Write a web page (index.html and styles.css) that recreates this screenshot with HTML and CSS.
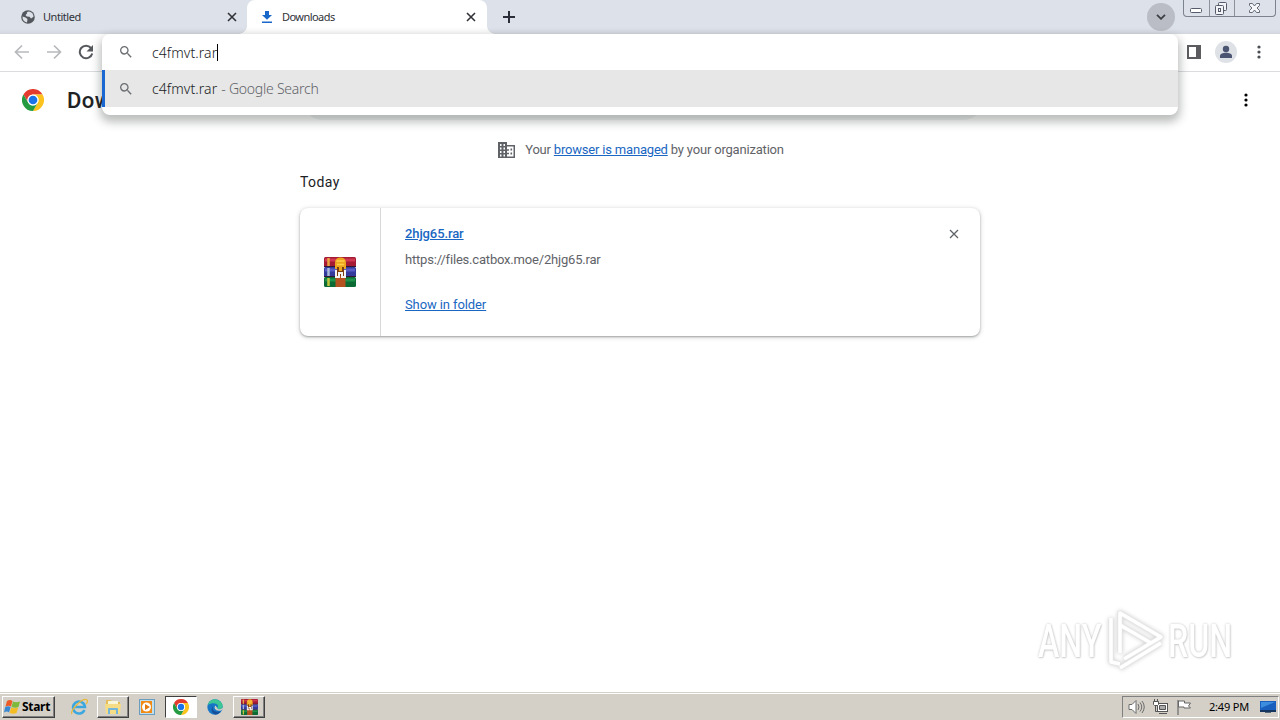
FILE: index.html
```html
<!DOCTYPE html>
<html lang="en">

<head>
    <meta charset="UTF-8">
    <meta name="viewport" content="width=device-width, initial-scale=1.0">
    <title>Downloads</title>
    <link rel="stylesheet" href="styles.css">
</head>

<body>

    <!-- shared icons -->
    <svg class="defs" width="0" height="0">
        <symbol id="chrome" viewBox="0 0 48 48">
            <circle cx="24" cy="24" r="23" fill="#fff"/>
            <path d="M24 12h20.8A24 24 0 0 0 3.2 12l10.4 18A12 12 0 0 1 24 12z" fill="#e33b2e"/>
            <path d="M34.4 30 24 48A24 24 0 0 0 44.8 12H24a12 12 0 0 1 10.4 18z" fill="#fcc31e"/>
            <path d="M13.6 30 3.2 12A24 24 0 0 0 24 48l10.4-18a12 12 0 0 1-20.8 0z" fill="#249a41"/>
            <circle cx="24" cy="24" r="12" fill="#fff"/>
            <circle cx="24" cy="24" r="9.5" fill="#1a73e8"/>
        </symbol>
        <symbol id="search" viewBox="0 0 24 24">
            <path d="M15.5 14h-.79l-.28-.27A6.47 6.47 0 0 0 16 9.5 6.5 6.5 0 1 0 9.5 16c1.61 0 3.09-.59 4.23-1.57l.27.28v.79l5 4.99L20.49 19l-4.99-5zm-6 0C7.01 14 5 11.99 5 9.5S7.01 5 9.5 5 14 7.01 14 9.5 11.99 14 9.5 14z" fill="#6b6e72"/>
        </symbol>
        <symbol id="cross" viewBox="0 0 10 10">
            <path d="M1 1l8 8M9 1l-8 8" stroke="currentColor" fill="none"/>
        </symbol>
        <symbol id="dots" viewBox="0 0 4 14">
            <circle cx="2" cy="2" r="1.6"/><circle cx="2" cy="7" r="1.6"/><circle cx="2" cy="12" r="1.6"/>
        </symbol>
        <symbol id="winrar" viewBox="0 0 32 30">
            <rect y="0" width="32" height="10" rx="1.5" fill="#a51b35"/>
            <rect x="1" y="1.500" width="30" height="3" fill="#cf3850"/>
            <rect y="10" width="32" height="10" rx="1.5" fill="#343a9c"/>
            <rect x="1" y="11.500" width="30" height="3" fill="#565dc4"/>
            <rect y="20" width="32" height="10" rx="1.5" fill="#0c6b35"/>
            <rect x="1" y="21.500" width="30" height="3" fill="#1f9149"/>
            <path d="M0 9.500h32M0 19.500h32" stroke="#301830"/>
            <path d="M4.500 1v8" stroke="#e8a540" stroke-width="2.500"/>
            <path d="M4.500 11v8" stroke="#a9bad8" stroke-width="2.500"/>
            <path d="M4.500 21v8" stroke="#c4c43c" stroke-width="2.500"/>
            <rect x="11.500" y="18" width="10" height="12" fill="#b4531f"/>
            <path d="M11 12V6q0-5.500 5.500-5.500T22 6v6z" fill="#eda61f"/>
            <path d="M12.500 4h8M13 7.500h7" stroke="#ffcf4a" stroke-width="1.500"/>
            <rect x="13" y="10" width="7" height="9" fill="#7b3c10"/>
            <path d="M15 9h3v5h-3z" fill="#eda61f"/>
            <path d="M12 13v7h3v-4h3v4h3v-7" fill="none" stroke="#f4f4f4" stroke-width="2"/>
        </symbol>
    </svg>

    <header class="tabstrip">
        <div class="tab">
            <svg width="14" height="14" viewBox="0 0 14 14">
                <circle cx="7" cy="7" r="6.800" fill="#53575d"/>
                <path d="M8 1.500c-2 0-2.500 1-2 2L4.500 5l1.300 1.500 2.700.2L10 8.500l2.500-1.700C12.500 4 11 2.200 8 1.500zM1.500 6.500l3 1 2 1.500-.5 3.500C3 12 1.300 9.500 1.500 6.500z" fill="#dce0e8"/>
            </svg>
            <span class="tab-title">Untitled</span>
            <svg class="tab-close" width="10" height="10"><use href="#cross"/></svg>
        </div>
        <div class="tab active">
            <svg width="12" height="14" viewBox="0 0 12 14" fill="#1967c8">
                <path d="M4 1h4v4h3L6 9.800 1 5h3zM1 11.500h10V13H1z"/>
            </svg>
            <span class="tab-title">Downloads</span>
            <svg class="tab-close" width="10" height="10"><use href="#cross"/></svg>
        </div>
        <svg class="new-tab" width="12" height="12" viewBox="0 0 12 12"><path d="M6 0v12M0 6h12" stroke="#2b2e38" stroke-width="2"/></svg>
        <div class="tab-search">
            <svg width="10" height="6" viewBox="0 0 10 6"><path d="M1 .8l4 4 4-4" fill="none" stroke="#3c4043" stroke-width="1.800"/></svg>
        </div>
        <div class="window-buttons">
            <span><svg width="25" height="16" viewBox="0 0 25 16"><rect x="6.500" y="8.500" width="11" height="4" rx="1" fill="#fff" stroke="#555b68"/></svg></span>
            <span><svg width="24" height="16" viewBox="0 0 24 16" fill="#f2f4f8" stroke="#555b68"><rect x="8.500" y="2.500" width="8" height="8" rx="1"/><rect x="5.500" y="5.500" width="8" height="9" rx="1"/><rect x="8.500" y="8.500" width="2" height="3"/></svg></span>
            <span><svg width="41" height="16" viewBox="0 0 41 16"><path d="M14.500 3.500h3l2 2.500 2-2.500h3v2L22 8l2.500 2.500v2h-3l-2-2.500-2 2.500h-3v-2L17 8l-2.500-2.500z" fill="#f5f7fa" stroke="#666b76"/></svg></span>
        </div>
    </header>

    <div class="toolbar">
        <div class="nav">
            <svg width="16" height="16" viewBox="0 0 16 16" fill="none" stroke="#b7b9bc" stroke-width="1.700"><path d="M15 8H2M8 1.500 1.500 8 8 14.500"/></svg>
            <svg width="16" height="16" viewBox="0 0 16 16" fill="none" stroke="#b7b9bc" stroke-width="1.700"><path d="M1 8h13M8 1.500 14.500 8 8 14.500"/></svg>
            <svg width="16" height="16" viewBox="0 0 16 16"><path d="M13 4A6.300 6.300 0 1 0 14.200 9.500" fill="none" stroke="#55585c" stroke-width="2"/><path d="M15 1v6.500H8.500z" fill="#55585c"/></svg>
        </div>
        <div class="toolbar-right">
            <svg width="14" height="14" viewBox="0 0 14 14"><path d="M1 1h12v12H1z" fill="#fff" stroke="#5b5b60" stroke-width="2"/><path d="M9 0h5v14H9z" fill="#5b5b60"/></svg>
            <svg class="avatar" width="22" height="22" viewBox="0 0 22 22"><circle cx="11" cy="11" r="11" fill="#dee1e6"/><circle cx="11" cy="8" r="3.200" fill="#4b5470"/><path d="M5 17v-2c0-2 3-3.200 6-3.200s6 1.200 6 3.200v2z" fill="#4b5470"/></svg>
            <svg class="menu" width="4" height="14"><use href="#dots"/></svg>
        </div>
    </div>

    <main class="page">
        <div class="page-header">
            <svg width="22" height="22"><use href="#chrome"/></svg>
            <h1>Downloads</h1>
            <div class="search-field"></div>
            <svg class="page-menu" width="4" height="14"><use href="#dots"/></svg>
        </div>

        <div class="managed">
            <svg width="17" height="16" viewBox="0 0 17 16">
                <path d="M0 0h9v3h8v13H0z" fill="#5f6368"/>
                <path d="M2 2h1.500v2H2zM5.500 2H7v2H5.500zM2 5.500h1.500v2H2zM5.500 5.500H7v2H5.500zM2 9h1.500v2H2zM5.500 9H7v2H5.500zM2 12.500h1.500v2H2zM5.500 12.500H7v2H5.500zM9 4.500h6.500v10H9z" fill="#fff"/>
                <path d="M9 7.200h2v1.600H9zM12.500 6.500h1.600v2h-1.600zM9 10.800h2v1.500H9zM12.500 10.500h1.600v2h-1.600z" fill="#5f6368"/>
            </svg>
            <span>Your <a href="#">browser is managed</a> by your organization</span>
        </div>

        <section class="downloads">
            <h2>Today</h2>
            <div class="card">
                <div class="file-icon"><svg width="32" height="30"><use href="#winrar"/></svg></div>
                <div class="details">
                    <a class="file-name" href="#">2hjg65.rar</a>
                    <span class="url">https://files.catbox.moe/2hjg65.rar</span>
                    <a class="show" href="#">Show in folder</a>
                </div>
                <svg class="remove" width="10" height="10"><use href="#cross"/></svg>
            </div>
        </section>
    </main>

    <!-- address bar with suggestions, lies over the page -->
    <div class="omnibox">
        <div class="omni-row">
            <svg width="16" height="16"><use href="#search"/></svg>
            <span class="query">c4fmvt.rar</span><i class="caret"></i>
        </div>
        <div class="omni-row selected">
            <svg width="16" height="16"><use href="#search"/></svg>
            <span class="query">c4fmvt.rar</span><span class="hint">- Google Search</span>
        </div>
    </div>

    <div class="watermark">
        <span>ANY</span>
        <svg width="58" height="62" viewBox="0 0 58 62" fill="none" stroke-linejoin="round">
            <g stroke="#e6e6e6" stroke-width="5"><path d="M14 44V4l41 24-37 22M14 16l31 18M5 9v44l9 2M14 59l41-25"/></g>
            <g stroke="#fff" stroke-width="3.500"><path d="M14 44V4l41 24-37 22M14 16l31 18M5 9v44l9 2M14 59l41-25"/></g>
        </svg>
        <span>RUN</span>
    </div>

    <footer class="taskbar">
        <div class="start">
            <svg width="17" height="16" viewBox="0 0 17 16">
                <path d="M3 2q3-2 5.500 0L7 7.500q-2-1.500-5.500 0z" fill="#ed5b27"/>
                <path d="M9 2.500q3 1.500 7 0L14.500 8q-3 1.500-7 0z" fill="#7dba3c"/>
                <path d="M1.200 8q3-1.500 5.500 0L5 13.500q-2-2-5 0z" fill="#3988d1"/>
                <path d="M7.200 8.500q3 1.500 7 0L12.500 14q-3 1.500-7 0z" fill="#f5bd24"/>
            </svg>
            <span>Start</span>
        </div>
        <div class="task">
            <svg width="18" height="18" viewBox="0 0 18 18" fill="none">
                <path d="M14.500 12A6 6 0 1 1 15 9H5" stroke="#3ca7df" stroke-width="2.500"/>
                <path d="M2 16C-1 13 13-1 17 2c1 1 0 3-1 4" stroke="#e7b83e" stroke-width="1.300"/>
            </svg>
        </div>
        <div class="task open">
            <svg width="18" height="17" viewBox="0 0 18 17">
                <path d="M2 2h5l1 2h8v12H2z" fill="#e4bd58"/><path d="M4 3h10v5H4z" fill="#f8f6d9"/><path d="M1 6h16l-1 10H2z" fill="#f6dc84"/>
                <path d="M4 16v-5q0-1 1-1h8q1 0 1 1v5h-2v-4H6v4z" fill="#72b6dc"/>
            </svg>
        </div>
        <div class="task">
            <svg width="16" height="16" viewBox="0 0 16 16"><rect x=".5" y=".5" width="15" height="15" fill="#bfdff0" stroke="#6a9dbe"/><path d="M2 2h11v12H2z" fill="#f28a16"/><circle cx="7.500" cy="8" r="4.500" fill="#fff"/><path d="M6 5l5 3-5 3z" fill="#e37b10"/></svg>
        </div>
        <div class="task pressed"><svg width="16" height="16"><use href="#chrome"/></svg></div>
        <div class="task">
            <svg width="16" height="16" viewBox="0 0 16 16">
                <circle cx="8" cy="8" r="7.700" fill="#1676c5"/>
                <path d="M.8 6C2 1.500 6 0 9 .4c5 .8 8 5.600 6.200 8.500-1.300 2-5 1.500-5 .1 0-.8 1-1 .8-2.200C10.500 4 5 3 .8 6z" fill="#3cc596"/>
                <path d="M6 7c-1.500 3.500 1 7 7.500 5.500-1 1.500-3 2.800-5 3C5 14.500 3 10 6 7z" fill="#164e99"/>
                <path d="M8.500 6.500c-2 2-.5 5 3.500 5.300 1.500.1 2.500-.4 3.300-1.300l.7-1.500-.8-.1c-1.300 2-5 1.500-5 .1z" fill="#d4d0c8"/>
            </svg>
        </div>
        <div class="task open"><svg width="17" height="16" viewBox="0 0 32 30" preserveAspectRatio="none"><use href="#winrar"/></svg></div>

        <div class="tray">
            <svg width="17" height="16" viewBox="0 0 17 16" fill="none" stroke="#6d6d6d"><path d="M1 5.500h3l4-4v13l-4-4H1z" fill="#fff"/><path d="M10 5q2 3 0 6M12 3.500q3.500 4.500 0 9M14 2q4.500 6 0 12"/></svg>
            <svg width="17" height="16" viewBox="0 0 17 16" fill="#fff" stroke="#555"><rect x="5.500" y="4.500" width="10" height="8"/><path d="M7.500 6.500h6v4h-6z" fill="#aaa"/><path d="M7 14.500h8"/><path d="M3.500 7v5.500h3" fill="none"/><path d="M1.500 2.500h5v3l-1 1h-3l-1-1zM2.500 0v2M5.500 0v2"/></svg>
            <svg width="17" height="16" viewBox="0 0 17 16"><path d="M2 1v15" stroke="#555"/><path d="M2.500 2h6v2h6l-2 3 2 2H8V8H2.500z" fill="#fff" stroke="#666"/></svg>
            <time>2:49 PM</time>
            <svg width="16" height="14" viewBox="0 0 16 14"><path d="M0 1h16v9H0z" fill="#195fbd"/><path d="M1 2h14L1 8z" fill="#3c8ddd"/><path d="M0 10h16v2H0z" fill="#17365f"/><path d="M5 12h6v1H5z" fill="#567"/></svg>
        </div>
    </footer>

</body>
</html>
```
FILE: styles.css
```css
* {
    box-sizing: border-box;
}

body {
    margin: 0;
    width: 1280px;
    height: 720px;
    overflow: hidden;
    position: relative;
    display: flex;
    flex-direction: column;
    background: #fff;
    font-family: Roboto, sans-serif;
    color: #202124;
}

svg {
    display: block;
    flex: none;
}

.defs {
    position: absolute;
}

h1, h2 {
    margin: 0;
}

a {
    color: #1967c2;
}

/* tabs */
.tabstrip {
    display: flex;
    align-items: center;
    height: 34px;
    background: linear-gradient(#dde1ea 29px, #d3d6dd);
    flex: none;
}

.tab {
    display: flex;
    align-items: center;
    width: 247px;
    height: 34px;
    padding: 0 10px 0 21px;
    font: 11px "Noto Sans", sans-serif;
    color: #303238;
}

.tab.active {
    width: 240px;
    padding: 0 11px 0 14px;
    background: linear-gradient(#fff 28px, #f8f8f8);
    border-radius: 8px 8px 0 0;
    position: relative;
}

.tab.active::before, .tab.active::after {
    content: "";
    position: absolute;
    bottom: 0;
    width: 8px;
    height: 8px;
}

.tab.active::before {
    left: -8px;
    background: radial-gradient(circle at 0 0, transparent 7.5px, #f9f9f9 8px);
}

.tab.active::after {
    right: -8px;
    background: radial-gradient(circle at 100% 0, transparent 7.5px, #f9f9f9 8px);
}

.tab-title {
    margin-left: 8px;
    margin-top: -2px;
    letter-spacing: -0.45px;
}

.active .tab-title {
    margin-left: 9px;
    letter-spacing: -0.55px;
}

.tab-close {
    margin-left: auto;
    stroke-width: 1.6;
}

.new-tab {
    margin-left: 16px;
}

.tab-search {
    width: 28px;
    height: 28px;
    margin-left: auto;
    border-radius: 50%;
    background: #babdc5;
    display: flex;
    align-items: center;
    justify-content: center;
}

.window-buttons {
    display: flex;
    align-self: flex-start;
    width: 93px;
    height: 17px;
    margin: 0 4px 0 8px;
    border: 1px solid #7c828e;
    border-top: 0;
    border-radius: 0 0 4px 4px;
}

.window-buttons span + span {
    border-left: 1px solid #8c919b;
}

/* toolbar */
.toolbar {
    display: flex;
    align-items: center;
    justify-content: space-between;
    height: 38px;
    padding: 0 19px 1px 14px;
    border-bottom: 1px solid #dadce0;
    flex: none;
}

.nav {
    display: flex;
    gap: 16px;
}

.toolbar-right {
    display: flex;
    align-items: center;
}

.avatar {
    margin: 0 20px 0 14px;
}

.menu {
    fill: #4a4d51;
}

/* downloads page */
.page {
    flex: 1;
}

.page-header {
    display: flex;
    align-items: center;
    height: 56px;
    padding: 0 32px 0 22px;
}

.page-header h1 {
    width: 236px;
    margin-left: 23px;
    font-size: 22px;
    font-weight: 500;
    letter-spacing: 0.4px;
}

.search-field {
    width: 680px;
    height: 40px;
    border-radius: 20px;
    background: #f1f3f4;
}

.page-menu {
    margin-left: auto;
}

.managed {
    display: flex;
    align-items: center;
    justify-content: center;
    gap: 10px;
    height: 20px;
    margin-top: 12px;
    padding-left: 2px;
    font-size: 13px;
    letter-spacing: -0.19px;
    color: #5f6368;
}

.managed span {
    margin-top: -2px;
}

.downloads {
    width: 680px;
    margin: 12px auto 0;
}

.downloads h2 {
    font-size: 14px;
    font-weight: 400;
    line-height: 20px;
    letter-spacing: 0.4px;
}

.card {
    display: flex;
    height: 128px;
    margin-top: 16px;
    border-radius: 8px;
    box-shadow: 0 1px 2px rgba(60, 64, 67, .4), 0 1px 4px 1px rgba(60, 64, 67, .16);
}

.file-icon {
    display: flex;
    align-items: center;
    justify-content: center;
    width: 81px;
    border-right: 1px solid #d8d8d8;
}

.details {
    display: flex;
    flex-direction: column;
    align-items: flex-start;
    flex: 1;
    padding: 16px 0 0 24px;
    font-size: 13px;
    line-height: 20px;
    letter-spacing: -0.1px;
}

.file-name {
    font-weight: 500;
}

.url {
    margin: 6px 0 25px;
    letter-spacing: -0.19px;
    color: #5f6368;
}

.remove {
    margin: 21px 21px 0 0;
    color: #5f6368;
    stroke-width: 1.3;
}

/* address bar */
.omnibox {
    position: absolute;
    left: 102px;
    top: 34px;
    width: 1076px;
    height: 81px;
    background: #fff;
    border-radius: 8px;
    box-shadow: 0 5px 10px 2px rgba(40, 50, 45, .32);
    font: 14px "Noto Sans", sans-serif;
}

.omni-row {
    display: flex;
    align-items: center;
    height: 36px;
    padding-left: 16px;
}

.omni-row.selected {
    height: 37px;
    background: linear-gradient(90deg, #1a67d2 3px, #e7e7e7 3px);
}

.query {
    margin-left: 18px;
    font-weight: 300;
    letter-spacing: 0.08px;
}

.caret {
    width: 1px;
    height: 17px;
    background: #000;
}

.hint {
    margin-left: 4px;
    font-weight: 300;
    letter-spacing: -0.25px;
    color: #5f6368;
}

/* watermark */
.watermark {
    position: absolute;
    left: 1038px;
    top: 609px;
    width: 194px;
    display: flex;
    align-items: center;
    font: 500 46px Roboto, sans-serif;
    color: #fff;
    text-shadow: 0 0 3px #c4c4c4, 1px 1px 2px #d5d5d5;
}

.watermark span {
    width: 68px;
    margin-top: 2px;
    transform: scaleX(.7);
    transform-origin: left;
}

.watermark svg {
    margin-right: 4px;
    filter: drop-shadow(0 0 2px #ccc);
}

/* taskbar */
.taskbar {
    display: flex;
    align-items: center;
    height: 28px;
    padding: 0 1px 0 2px;
    background: #d4d0c8;
    border-top: 1px solid #d4d0c8;
    box-shadow: inset 0 1px #fff;
    flex: none;
}

.start {
    display: flex;
    align-items: center;
    gap: 1px;
    width: 53px;
    height: 22px;
    margin-right: 8px;
    padding-left: 1px;
    border: 1px solid;
    border-color: #fff #404040 #404040 #fff;
    box-shadow: inset -1px -1px #808080;
    font: bold 12px "Noto Sans", sans-serif;
    letter-spacing: -0.3px;
    color: #000;
}

.task {
    display: flex;
    align-items: center;
    justify-content: center;
    width: 32px;
    height: 22px;
    margin-right: 2px;
}

.task.open {
    border: 1px solid;
    border-color: #fff #404040 #404040 #fff;
    box-shadow: inset -1px -1px #808080;
}

.task.pressed {
    border: 1px solid;
    border-color: #404040 #fff #fff #404040;
    background: #fff;
}

.tray {
    display: flex;
    align-items: center;
    gap: 7px;
    width: 157px;
    height: 22px;
    margin-left: auto;
    padding-left: 5px;
    border: 1px solid;
    border-color: #808080 #fff #fff #808080;
    font: 11px "Noto Sans", sans-serif;
    color: #000;
}

.tray time {
    width: 44px;
    margin-left: 9px;
    white-space: nowrap;
    letter-spacing: -0.2px;
}
```
